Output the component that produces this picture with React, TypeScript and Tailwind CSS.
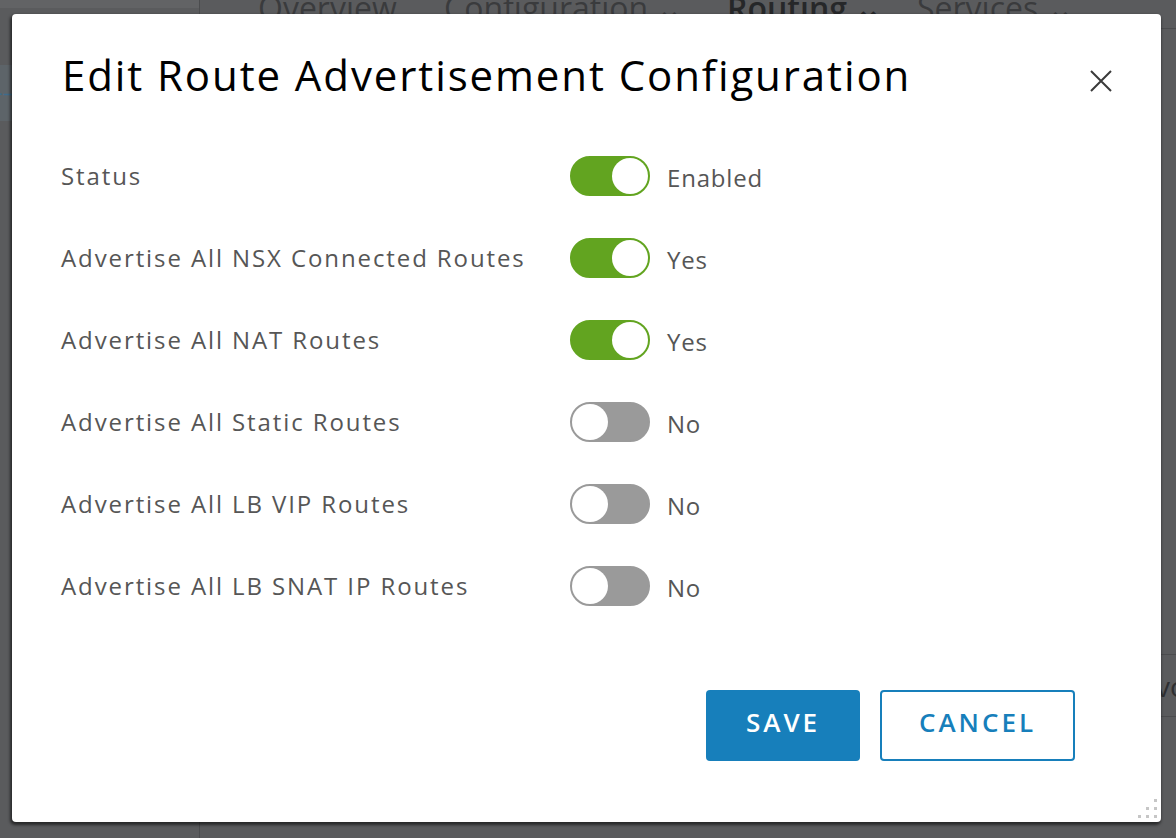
import React from 'react';

type Row = { label: string; on: boolean; value: string };

const rows: Row[] = [
  { label: 'Status', on: true, value: 'Enabled' },
  { label: 'Advertise All NSX Connected Routes', on: true, value: 'Yes' },
  { label: 'Advertise All NAT Routes', on: true, value: 'Yes' },
  { label: 'Advertise All Static Routes', on: false, value: 'No' },
  { label: 'Advertise All LB VIP Routes', on: false, value: 'No' },
  { label: 'Advertise All LB SNAT IP Routes', on: false, value: 'No' },
];

function Toggle({ on }: { on: boolean }) {
  return (
    <div
      className={
        on
          ? 'w-[80px] h-[40px] rounded-full bg-[#62a420] border-2 border-[#62a420] flex items-center justify-end shrink-0'
          : 'w-[80px] h-[40px] rounded-full bg-[#9a9a9a] border-2 border-[#9a9a9a] flex items-center justify-start shrink-0'
      }
    >
      <div className="w-[36px] h-[36px] rounded-full bg-white" />
    </div>
  );
}

export default function App() {
  return (
    <div
      className="relative w-[1176px] h-[838px] overflow-hidden bg-[#5a5b5d]"
      style={{ fontFamily: '"Open Sans", "Liberation Sans", sans-serif' }}
    >
      {/* Dimmed page behind the modal */}
      <div className="flex h-full">
        <div className="w-[200px] shrink-0 border-r border-[#4b4c4e] flex flex-col">
          <div className="h-[8px] bg-[#626365]" />
          <div className="mt-[57px] h-[56px] bg-[#5d6469] flex items-center">
            <span className="text-[#3f6c8c] text-[20px] leading-none ml-[-4px]">‐–</span>
          </div>
        </div>
        <div className="flex-1 flex flex-col">
          <div className="flex pl-[58px] -mt-[12px] text-[32px] leading-[40px] text-[#3a3b3d]">
            <span className="w-[186px]">Overview</span>
            <span className="w-[283px]">Configuration ⌄</span>
            <span className="w-[190px] font-semibold text-[#262729]">Routing ⌄</span>
            <span>Services ⌄</span>
          </div>
          <div className="ml-auto w-[30px] border-t border-[#4b4c4e]" />
          <div className="ml-auto mt-[625px] w-[16px] h-[63px] border-y border-[#4b4c4e] flex items-center overflow-hidden">
            <span className="text-[28px] text-[#2e2f31] -ml-[4px]">vo</span>
          </div>
        </div>
      </div>

      {/* Modal */}
      <div className="absolute left-[12px] top-[14px] w-[1149px] h-[808px] bg-white rounded-[4px] shadow-[-1px_2px_3px_1px_rgba(0,0,0,0.55)] flex flex-col">
        <div className="flex items-start justify-between pl-[50px] pr-[48px] pt-[36px]">
          <h1 className="text-[42px] leading-[50px] tracking-[1.9px] text-black font-normal">
            Edit Route Advertisement Configuration
          </h1>
          <button className="mt-[19px] w-[24px] h-[24px]">
            <svg width="24" height="24" viewBox="0 0 24 24">
              <path d="M2 2 L22 22 M22 2 L2 22" stroke="#3a3a3a" strokeWidth="2" fill="none" />
            </svg>
          </button>
        </div>

        <div className="mt-[56px] pl-[49px] flex flex-col gap-[42px]">
          {rows.map((r) => (
            <div key={r.label} className="flex items-center h-[40px]">
              <span className="w-[509px] shrink-0 text-[24px] tracking-[1.9px] text-[#565656]">{r.label}</span>
              <Toggle on={r.on} />
              <span className="ml-[17px] mt-[3px] text-[24px] tracking-[0.8px] text-[#565656]">{r.value}</span>
            </div>
          ))}
        </div>

        <div className="mt-auto mb-[61px] pr-[86px] flex justify-end gap-[20px]">
          <button className="w-[154px] h-[71px] pb-[6px] rounded-[4px] bg-[#177fbb] text-white text-[26px] font-semibold tracking-[3px]">
            SAVE
          </button>
          <button className="w-[195px] h-[71px] pb-[6px] rounded-[4px] border-2 border-[#177fbb] bg-white text-[#177fbb] text-[26px] font-semibold tracking-[3px]">
            CANCEL
          </button>
        </div>

        {/* resize grip */}
        <div className="absolute right-[4px] bottom-[4px] grid grid-cols-3 gap-[5px]">
          <span />
          <span />
          <span className="w-[3px] h-[3px] bg-[#c6c6c6]" />
          <span />
          <span className="w-[3px] h-[3px] bg-[#c6c6c6]" />
          <span className="w-[3px] h-[3px] bg-[#c6c6c6]" />
          <span className="w-[3px] h-[3px] bg-[#c6c6c6]" />
          <span className="w-[3px] h-[3px] bg-[#c6c6c6]" />
          <span className="w-[3px] h-[3px] bg-[#c6c6c6]" />
        </div>
      </div>
    </div>
  );
}
